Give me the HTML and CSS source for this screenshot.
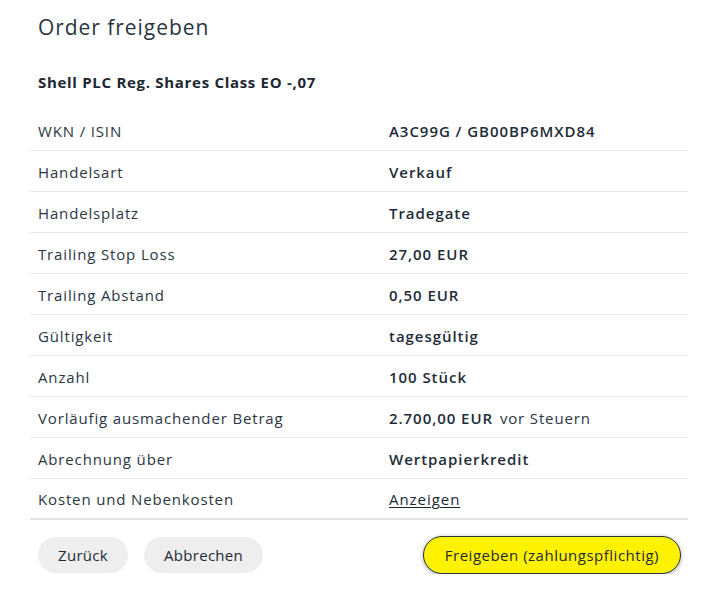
FILE: index.html
```html
<!DOCTYPE html>
<html lang="de">
<head>
<meta charset="utf-8">
<title>Order freigeben</title>
<link rel="stylesheet" href="styles.css">
</head>
<body>
<div class="dialog">
  <h1 class="title">Order freigeben</h1>
  <h2 class="subtitle">Shell PLC Reg. Shares Class EO -,07</h2>
  <div class="details">
    <div class="row"><span class="label">WKN / ISIN</span><span class="value">A3C99G / GB00BP6MXD84</span></div>
    <div class="row"><span class="label">Handelsart</span><span class="value">Verkauf</span></div>
    <div class="row"><span class="label">Handelsplatz</span><span class="value">Tradegate</span></div>
    <div class="row"><span class="label">Trailing Stop Loss</span><span class="value">27,00 EUR</span></div>
    <div class="row"><span class="label">Trailing Abstand</span><span class="value">0,50 EUR</span></div>
    <div class="row"><span class="label">Gültigkeit</span><span class="value">tagesgültig</span></div>
    <div class="row"><span class="label">Anzahl</span><span class="value">100 Stück</span></div>
    <div class="row"><span class="label">Vorläufig ausmachender Betrag</span><span class="value">2.700,00 EUR <span class="note">vor Steuern</span></span></div>
    <div class="row"><span class="label">Abrechnung über</span><span class="value">Wertpapierkredit</span></div>
    <div class="row last"><span class="label">Kosten und Nebenkosten</span><span class="value"><a class="link" href="#">Anzeigen</a></span></div>
  </div>
  <div class="actions">
    <button class="btn btn-secondary">Zurück</button>
    <button class="btn btn-secondary">Abbrechen</button>
    <button class="btn btn-primary">Freigeben (zahlungspflichtig)</button>
  </div>
</div>
</body>
</html>
```
FILE: styles.css
```css
* { box-sizing: border-box; }
body {
  margin: 0;
  background: #ffffff;
  font-family: "Open Sans", "Noto Sans", sans-serif;
  color: #1f2a37;
}
.dialog {
  padding: 12px 18px 0 30px;
}
.title {
  margin: 0;
  padding-left: 8px;
  font-size: 21px;
  font-weight: 400;
  line-height: 30px;
  color: #2a3441;
  letter-spacing: 0.95px;
}
.subtitle {
  margin: 29px 0 0 0;
  padding-left: 8px;
  font-size: 15px;
  font-weight: 700;
  line-height: 22px;
  color: #1c2733;
  letter-spacing: 0.7px;
}
.details {
  margin-top: 17px;
  display: flex;
  flex-direction: column;
}
.row {
  display: grid;
  grid-template-columns: 351px 1fr;
  align-items: center;
  height: 41px;
  padding-left: 8px;
  padding-top: 1px;
  border-bottom: 1px solid #e8e8e8;
  font-size: 15px;
  letter-spacing: 0.85px;
}
.row.last {
  border-bottom: 2px solid #e4e4e4;
}
.label {
  color: #2b3643;
}
.value {
  font-weight: 600;
  color: #222c38;
  letter-spacing: 0.95px;
}
.note {
  font-weight: 400;
  margin-left: 2px;
  color: #2b3643;
  letter-spacing: 0.85px;
}
.link {
  color: #1c2733;
  font-weight: 400;
  text-decoration: underline;
  text-underline-offset: 2px;
}
.actions {
  display: flex;
  align-items: center;
  gap: 16px;
  padding: 16px 7px 0 8px;
}
.btn {
  font-family: inherit;
  font-size: 15px;
  letter-spacing: 0.3px;
  border-radius: 18px;
  height: 36px;
  padding: 0 20px;
  cursor: pointer;
}
.btn-secondary {
  background: #eeeeee;
  border: none;
  color: #1f2a37;
  font-weight: 500;
}
.btn-primary {
  margin-left: auto;
  background: #fff200;
  border: 1px solid #2a3441;
  height: 38px;
  border-radius: 19px;
  padding: 0 21px;
  color: #1f2a37;
  font-weight: 500;
  letter-spacing: 0.5px;
  box-shadow: 0 1px 4px rgba(0,0,0,0.35);
}
```
